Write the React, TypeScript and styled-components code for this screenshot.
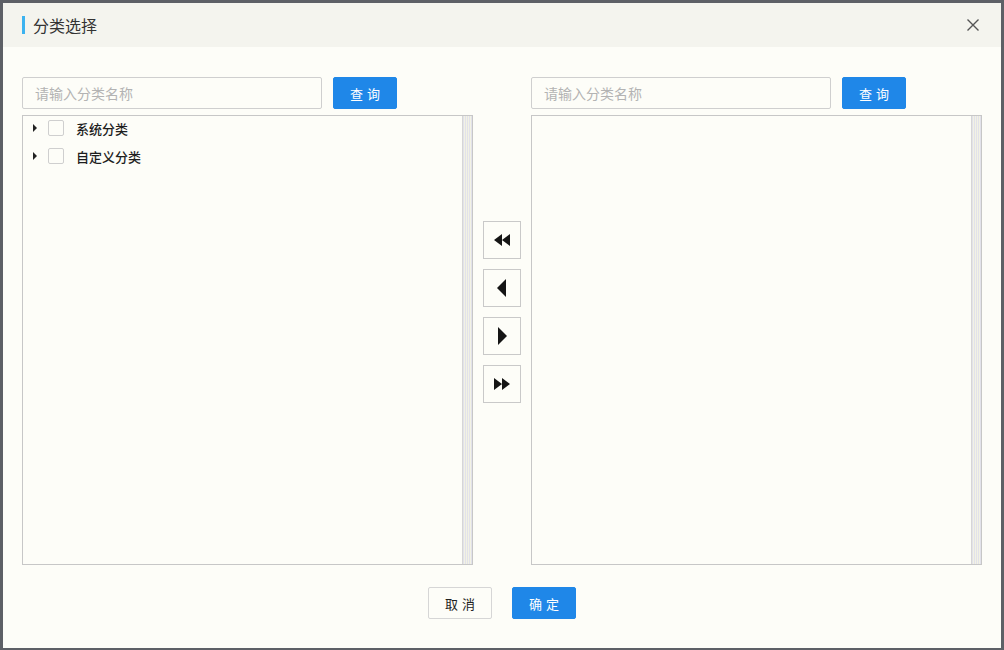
import React, { useState } from "react";
import styled, { createGlobalStyle } from "styled-components";

const GlobalStyle = createGlobalStyle`
  html, body {
    margin: 0;
    padding: 0;
    background: #5d6066;
    font-family: "Noto Sans CJK SC", "Noto Sans", sans-serif;
  }
`;

const Dialog = styled.div`
  margin: 3px 0 0 3px;
  width: 998px;
  height: 645px;
  background: #fdfdf8;
  display: flex;
  flex-direction: column;
  box-sizing: border-box;
`;

const Header = styled.div`
  height: 44px;
  background: #f4f4ee;
  display: flex;
  align-items: center;
  padding: 0 19px;
  flex-shrink: 0;
`;

const Title = styled.div`
  flex: 1;
  font-size: 16px;
  color: #333;
  border-left: 3px solid #3cb3f0;
  padding-left: 8px;
  line-height: 18px;
`;

const Close = styled.button`
  border: none;
  background: none;
  padding: 0;
  width: 20px;
  height: 20px;
  display: flex;
  align-items: center;
  justify-content: center;
  cursor: pointer;
  margin-right: -1px;
`;

const Body = styled.div`
  display: flex;
  padding: 30px 19px 0;
  gap: 10px;
`;

const Column = styled.div`
  width: 451px;
  display: flex;
  flex-direction: column;
  gap: 6px;
`;

const SearchRow = styled.div`
  display: flex;
  gap: 11px;
`;

const SearchInput = styled.input`
  width: 300px;
  height: 32px;
  box-sizing: border-box;
  border: 1px solid #cfcfcf;
  border-radius: 2px;
  background: #fdfdf8;
  padding: 0 12px;
  font-size: 14px;
  font-family: inherit;
  color: #333;
  outline: none;
  &::placeholder {
    color: #b3b3b3;
  }
`;

const Button = styled.button<{ $primary?: boolean }>`
  width: 64px;
  height: 32px;
  box-sizing: border-box;
  border: 1px solid ${(p) => (p.$primary ? "#1f87e8" : "#d6d6d6")};
  border-radius: 2px;
  background: ${(p) => (p.$primary ? "#1f87e8" : "#fdfdf8")};
  color: ${(p) => (p.$primary ? "#fff" : "#222")};
  font-size: 13px;
  font-family: inherit;
  letter-spacing: 4px;
  padding: 0 0 0 4px;
  cursor: pointer;
`;

const Panel = styled.div`
  height: 450px;
  box-sizing: border-box;
  border: 1px solid #c7c7c7;
  display: flex;
`;

const PanelContent = styled.div`
  flex: 1;
  padding: 0 0 0 8px;
`;

const ScrollTrack = styled.div`
  width: 9px;
  border-left: 1px solid #d6d6d6;
  background: repeating-linear-gradient(
    90deg,
    #e2e2ea 0 1px,
    #f2f2e4 1px 2px
  );
`;

const TreeRow = styled.div`
  display: flex;
  align-items: center;
  height: 24px;
  margin-bottom: 4px;
  font-size: 13px;
  font-weight: 500;
  color: #1e1e1e;
`;

const Caret = styled.span`
  width: 0;
  height: 0;
  border-top: 4px solid transparent;
  border-bottom: 4px solid transparent;
  border-left: 4px solid #222;
  margin: 0 11px 0 2px;
`;

const CheckBox = styled.span`
  width: 16px;
  height: 16px;
  box-sizing: border-box;
  border: 1px solid #cfcfcf;
  border-radius: 2px;
  background: #fdfdf8;
  margin-right: 12px;
`;

const Middle = styled.div`
  width: 38px;
  display: flex;
  flex-direction: column;
  gap: 10px;
  padding-top: 144px;
`;

const MoveButton = styled.button`
  width: 38px;
  height: 38px;
  box-sizing: border-box;
  border: 1px solid #c9c9c9;
  background: #fdfdf8;
  display: flex;
  align-items: center;
  justify-content: center;
  padding: 0;
  cursor: pointer;
`;

const Footer = styled.div`
  display: flex;
  justify-content: center;
  gap: 20px;
  padding-top: 22px;
`;

const arrows: Record<string, string> = {
  allLeft: "M10 4 L2 10 L10 16 Z M18 4 L10 10 L18 16 Z",
  left: "M14 1 L5 10 L14 19 Z",
  right: "M6 1 L15 10 L6 19 Z",
  allRight: "M2 4 L10 10 L2 16 Z M10 4 L18 10 L10 16 Z",
};

const Arrow: React.FC<{ kind: string }> = ({ kind }) => (
  <svg width="20" height="20" viewBox="0 0 20 20">
    <path d={arrows[kind]} fill="#151515" />
  </svg>
);

const treeItems = ["系统分类", "自定义分类"];

export default function App() {
  const [leftQuery, setLeftQuery] = useState("");
  const [rightQuery, setRightQuery] = useState("");

  return (
    <>
      <GlobalStyle />
      <Dialog>
        <Header>
          <Title>分类选择</Title>
          <Close aria-label="close">
            <svg width="14" height="14" viewBox="0 0 14 14">
              <path d="M1.5 1.5 L12.5 12.5 M12.5 1.5 L1.5 12.5" stroke="#555" strokeWidth="1.4" />
            </svg>
          </Close>
        </Header>
        <Body>
          <Column>
            <SearchRow>
              <SearchInput
                placeholder="请输入分类名称"
                value={leftQuery}
                onChange={(e) => setLeftQuery(e.target.value)}
              />
              <Button $primary>查询</Button>
            </SearchRow>
            <Panel>
              <PanelContent>
                {treeItems.map((name) => (
                  <TreeRow key={name}>
                    <Caret />
                    <CheckBox />
                    {name}
                  </TreeRow>
                ))}
              </PanelContent>
              <ScrollTrack />
            </Panel>
          </Column>
          <Middle>
            <MoveButton><Arrow kind="allLeft" /></MoveButton>
            <MoveButton><Arrow kind="left" /></MoveButton>
            <MoveButton><Arrow kind="right" /></MoveButton>
            <MoveButton><Arrow kind="allRight" /></MoveButton>
          </Middle>
          <Column>
            <SearchRow>
              <SearchInput
                placeholder="请输入分类名称"
                value={rightQuery}
                onChange={(e) => setRightQuery(e.target.value)}
              />
              <Button $primary>查询</Button>
            </SearchRow>
            <Panel>
              <PanelContent />
              <ScrollTrack />
            </Panel>
          </Column>
        </Body>
        <Footer>
          <Button>取消</Button>
          <Button $primary>确定</Button>
        </Footer>
      </Dialog>
    </>
  );
}
